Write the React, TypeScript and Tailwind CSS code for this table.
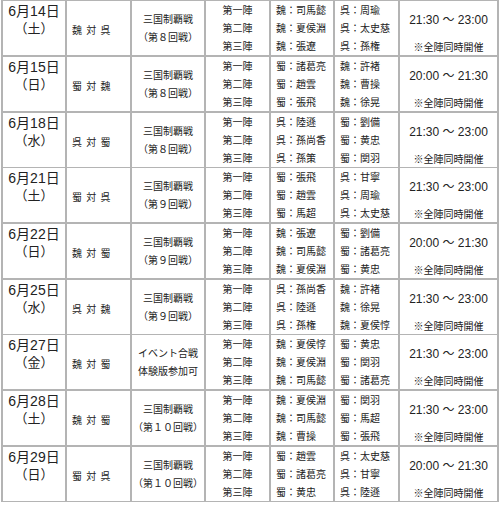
import React from 'react';

type Match = {
  date: string;
  day: string;
  versus: string;
  event: [string, string];
  left: [string, string, string];
  right: [string, string, string];
  time: string;
  h: string;
};

const battle = (n: string): [string, string] => ['三国制覇戦', `（第${n}回戦）`];

const matches: Match[] = [
  { date: '6月14日', day: '（土）', versus: '魏 対 呉', event: battle('８'), left: ['魏：司馬懿', '魏：夏侯淵', '魏：張遼'], right: ['呉：周瑜', '呉：太史慈', '呉：孫権'], time: '21:30 ～ 23:00', h: 'h-[54px]' },
  { date: '6月15日', day: '（日）', versus: '蜀 対 魏', event: battle('８'), left: ['蜀：諸葛亮', '蜀：趙雲', '蜀：張飛'], right: ['魏：許褚', '魏：曹操', '魏：徐晃'], time: '20:00 ～ 21:30', h: 'h-[54px]' },
  { date: '6月18日', day: '（水）', versus: '呉 対 蜀', event: battle('８'), left: ['呉：陸遜', '呉：孫尚香', '呉：孫策'], right: ['蜀：劉備', '蜀：黄忠', '蜀：関羽'], time: '21:30 ～ 23:00', h: 'h-[53px]' },
  { date: '6月21日', day: '（土）', versus: '蜀 対 呉', event: battle('９'), left: ['蜀：張飛', '蜀：趙雲', '蜀：馬超'], right: ['呉：甘寧', '呉：周瑜', '呉：太史慈'], time: '21:30 ～ 23:00', h: 'h-[54px]' },
  { date: '6月22日', day: '（日）', versus: '魏 対 蜀', event: battle('９'), left: ['魏：張遼', '魏：司馬懿', '魏：夏侯淵'], right: ['蜀：劉備', '蜀：諸葛亮', '蜀：黄忠'], time: '20:00 ～ 21:30', h: 'h-[54px]' },
  { date: '6月25日', day: '（水）', versus: '呉 対 魏', event: battle('９'), left: ['呉：孫尚香', '呉：陸遜', '呉：孫権'], right: ['魏：許褚', '魏：徐晃', '魏：夏侯惇'], time: '21:30 ～ 23:00', h: 'h-[53px]' },
  { date: '6月27日', day: '（金）', versus: '魏 対 蜀', event: ['イベント合戦', '体験版参加可'], left: ['魏：夏侯惇', '魏：夏侯淵', '魏：司馬懿'], right: ['蜀：黄忠', '蜀：関羽', '蜀：諸葛亮'], time: '21:30 ～ 23:00', h: 'h-[54px]' },
  { date: '6月28日', day: '（土）', versus: '魏 対 蜀', event: battle('１０'), left: ['魏：夏侯淵', '魏：司馬懿', '魏：曹操'], right: ['蜀：関羽', '蜀：馬超', '蜀：張飛'], time: '21:30 ～ 23:00', h: 'h-[54px]' },
  { date: '6月29日', day: '（日）', versus: '蜀 対 呉', event: battle('１０'), left: ['蜀：趙雲', '蜀：諸葛亮', '蜀：黄忠'], right: ['呉：太史慈', '呉：甘寧', '呉：陸遜'], time: '20:00 ～ 21:30', h: 'h-[53px]' },
];

const jin = ['第一陣', '第二陣', '第三陣'];

function Row({ m }: { m: Match }) {
  return (
    <div className={`grid grid-cols-[62px_63px_72px_63px_62px_63px_97px] gap-[2px] ${m.h}`}>
      {/* date */}
      <div className="bg-white pt-[2px] text-center font-['Liberation_Sans','Noto_Sans_CJK_JP',sans-serif] text-[14px] leading-[17px]">
        <div>{m.date}</div>
        <div className="text-[13px]">{m.day}</div>
      </div>
      {/* matchup */}
      <div className="flex items-center bg-white pl-[5px] pt-[2px] text-[10px] [word-spacing:2px]">{m.versus}</div>
      {/* event */}
      <div className="flex flex-col items-center justify-center bg-white text-[10px] leading-[18px]">
        <div>{m.event[0]}</div>
        <div>{m.event[1]}</div>
      </div>
      {/* 陣 */}
      <div className="flex flex-col items-center justify-center bg-white text-[10px] leading-[18px]">
        {jin.map((j) => (
          <div key={j}>{j}</div>
        ))}
      </div>
      <div className="flex flex-col justify-center bg-white pl-[5px] text-[10px] leading-[18px]">
        {m.left.map((n) => (
          <div key={n}>{n}</div>
        ))}
      </div>
      <div className="flex flex-col justify-center bg-white pl-[5px] text-[10px] leading-[18px]">
        {m.right.map((n) => (
          <div key={n}>{n}</div>
        ))}
      </div>
      {/* time */}
      <div className="flex flex-col items-center justify-between bg-white pt-[10px] pb-[1px]">
        <div className="font-['Liberation_Sans','Noto_Sans_CJK_JP',sans-serif] text-[12px] leading-[18px]">{m.time}</div>
        <div className="text-[10px] leading-[14px]">※全陣同時開催</div>
      </div>
    </div>
  );
}

export default function App() {
  return (
    <div className="h-[505px] w-[500px] overflow-hidden bg-white font-['Noto_Sans_CJK_JP',sans-serif] text-[#222]">
      <div className="-mt-[1px] ml-[1px] flex w-[498px] flex-col gap-[2px] bg-[#b4b4b4] p-[2px]">
        {matches.map((m) => (
          <Row key={m.date} m={m} />
        ))}
      </div>
    </div>
  );
}
